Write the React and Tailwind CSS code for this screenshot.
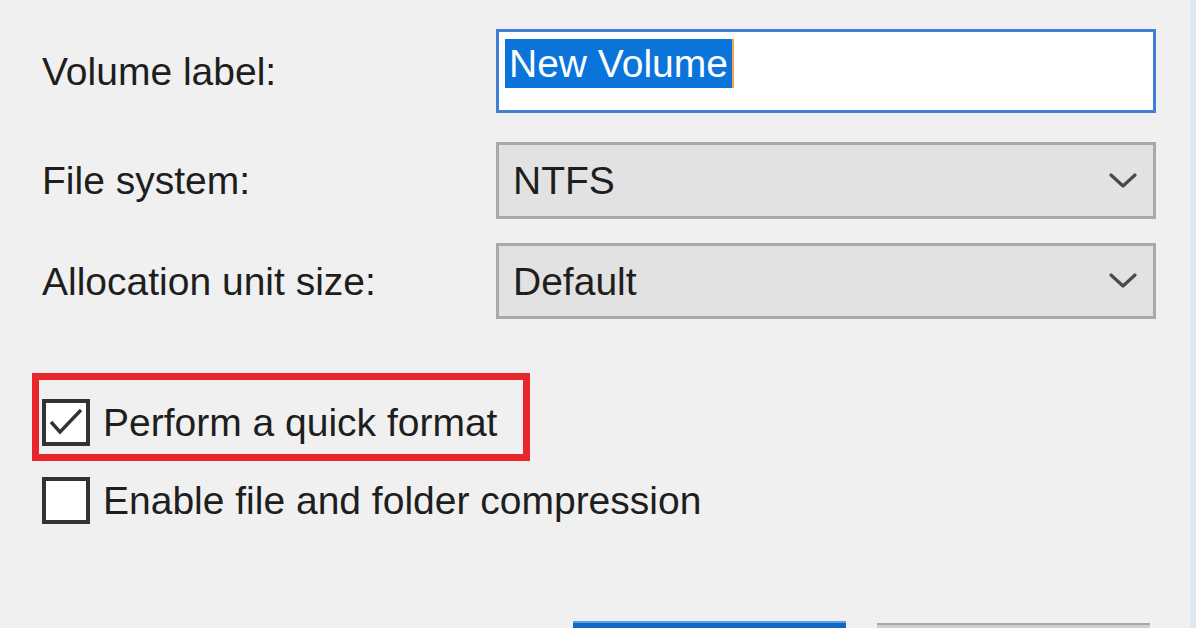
import React from "react";

const font = { fontFamily: '"Liberation Sans", Arial, sans-serif' };

function Chevron() {
  return (
    <svg width="28" height="16" viewBox="0 0 28 16" className="shrink-0">
      <polyline points="2,2 14,13 26,2" fill="none" stroke="#4a4a4a" strokeWidth="3.2" strokeLinecap="round" strokeLinejoin="round" />
    </svg>
  );
}

function Select({ value, h }) {
  return (
    <div className={`flex w-[660px] ${h} items-center justify-between border-[3px] border-[#a9a9a9] bg-[#e2e2e2] pl-[14px] pr-[16px]`}>
      <span className="text-[39px] leading-none text-[#1e1e1e]">{value}</span>
      <Chevron />
    </div>
  );
}

function Checkbox({ checked }) {
  return (
    <div className="relative h-[47px] w-[48px] shrink-0 border-[4px] border-[#333333] bg-white">
      {checked && (
        <svg width="40" height="39" viewBox="0 0 40 39" className="absolute left-0 top-0">
          <polyline points="5,19 14,29 35,7" fill="none" stroke="#333333" strokeWidth="3.4" strokeLinejoin="miter" />
        </svg>
      )}
    </div>
  );
}

export default function App() {
  return (
    <div className="flex h-[628px] w-[1196px] overflow-hidden bg-[#f0f0f0]" style={font}>
      <div className="flex flex-1 flex-col pl-[42px] pt-[29px]">
        <div className="flex h-[84px] shrink-0 items-center">
          <div className="w-[454px] text-[39px] leading-none text-[#1e1e1e]">Volume label:</div>
          <div className="flex h-[84px] w-[660px] items-start border-[3px] border-[#3f7fd4] bg-white pl-[6px] pt-[7px]">
            <span className="inline-block h-[49px] bg-[#0a74da] px-[4px] text-[39px] leading-[49px] text-white">New Volume</span>
            <span className="inline-block h-[49px] w-[2px] bg-[#f2a54a]"></span>
          </div>
        </div>
        <div className="mt-[29px] flex h-[77px] shrink-0 items-center">
          <div className="w-[454px] text-[39px] leading-none text-[#1e1e1e]">File system:</div>
          <Select value="NTFS" h="h-[77px]" />
        </div>
        <div className="mt-[24px] flex h-[76px] shrink-0 items-center">
          <div className="w-[454px] text-[39px] leading-none text-[#1e1e1e]">Allocation unit size:</div>
          <Select value="Default" h="h-[76px]" />
        </div>

        <div className="ml-[-10px] mt-[54px] flex h-[88px] w-[498px] shrink-0 items-start border-[7px] border-[#e8272c] pl-[3px] pt-[19px]">
          <div className="flex items-center gap-[13px]">
            <Checkbox checked />
            <span className="text-[39px] leading-none text-[#1e1e1e]">Perform a quick format</span>
          </div>
        </div>

        <div className="mt-[16px] flex shrink-0 items-center gap-[13px]">
          <Checkbox />
          <span className="text-[39px] leading-none text-[#1e1e1e]">Enable file and folder compression</span>
        </div>

        <div className="mt-[97px] flex shrink-0 gap-[31px] pl-[531px]">
          <div className="h-[20px] w-[273px] shrink-0 border-t-[2px] border-[#5aa0e6] bg-[#0f68c4]"></div>
          <div className="mt-[2px] h-[20px] w-[273px] shrink-0 border-t-[2px] border-[#a8a8a8] bg-[#d0d0d0]"></div>
        </div>
      </div>
      <div className="w-[6px] shrink-0 bg-[#dfe7ef]"></div>
    </div>
  );
}
